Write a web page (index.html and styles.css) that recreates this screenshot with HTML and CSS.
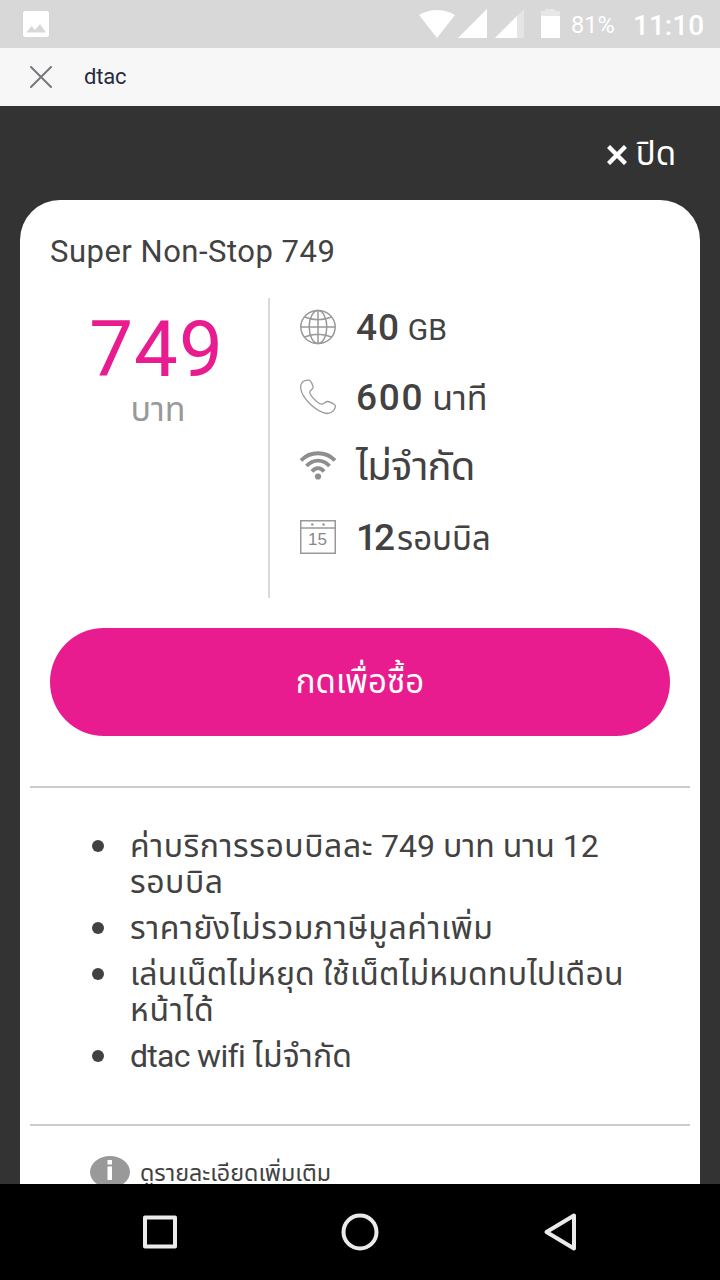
FILE: index.html
```html
<!DOCTYPE html>
<html lang="th">
<head>
<meta charset="utf-8">
<title>dtac</title>
<link rel="stylesheet" href="styles.css">
</head>
<body>
<header class="status">
  <svg class="status-image" width="26" height="26" viewBox="0 0 26 26"><path fill="#fff" fill-rule="evenodd" d="M2 0H24Q26 0 26 2V24Q26 26 24 26H2Q0 26 0 24V2Q0 0 2 0ZM3.500 21.500H23L17 13L12 19L8.500 15Z"/></svg>
  <svg class="signals" width="142" height="30" viewBox="0 0 142 30" fill="#fff">
    <path d="M0 6Q18-4 36 6L18 29Z"/>
    <path d="M39 29L68 0V29Z"/>
    <path opacity=".35" d="M76 29L105 0V29Z"/>
    <path d="M76 29L98 7V29Z"/>
    <path opacity=".4" d="M122 2H126V0H136V2H141V8H122Z"/>
    <path d="M122 7H141V29H122Z"/>
  </svg>
  <span class="battery">81%</span>
  <span class="clock">11:10</span>
</header>
<nav class="toolbar">
  <svg width="22" height="22" viewBox="0 0 22 22" fill="none" stroke="#77777f" stroke-width="2" stroke-linecap="round"><path d="M1 1L21 21M21 1L1 21"/></svg>
  <span>dtac</span>
</nav>
<main class="page">
  <div class="close">
    <svg width="20" height="20" viewBox="0 0 20 20" stroke="#fff" stroke-width="4.400"><path d="M1.500 1.500L18.500 18.500M18.500 1.500L1.500 18.500"/></svg>
    <span>ปิด</span>
  </div>
  <article class="card">
    <h1 class="title">Super Non-Stop 749</h1>
    <section class="plan">
      <div class="price">
        <div class="amount">749</div>
        <div class="baht">บาท</div>
      </div>
      <ul class="features">
        <li>
          <svg class="icon" viewBox="0 0 36 36" fill="none" stroke="#999" stroke-width="1.500"><ellipse cx="18" cy="18" rx="17.200" ry="16.500"/><ellipse cx="18" cy="18" rx="8.800" ry="16.500"/><path d="M18 1V35M1 18H35M4.500 8Q18 13.500 31.500 8M4.500 28Q18 22.500 31.500 28"/></svg>
          <span class="feature"><b class="n40">40</b><span class="gb">GB</span></span>
        </li>
        <li>
          <svg class="icon" viewBox="0 0 36 36" fill="none" stroke="#999" stroke-width="1.300" stroke-linejoin="round"><path d="M1.500 4.500C3 1.800 6 1 9.500 1.200C11 2 13 6.500 13.200 8.500C13 10 9.700 11.200 9.700 13.300C10.500 17 17.500 24.500 21.500 25.200C24 25.300 25.500 22.300 27.500 22.500C30 22.700 34 24.500 35.300 26.500C35.700 29.500 32.500 34.500 27.500 34.500C16 33.500 1.500 18.500 .7 9C.6 7.300 .8 5.800 1.500 4.500Z"/></svg>
          <span class="feature"><b class="n600">600</b><span class="minutes">นาที</span></span>
        </li>
        <li>
          <svg class="icon" viewBox="0 0 36 36" fill="none" stroke="#8e8e8e" stroke-width="3.900"><path d="M1 11.500C10 1.800 26 1.800 35 11.500M6.500 17C13 9.800 23 9.800 29.500 17M12 22.500C15.500 18 20.500 18 24 22.500"/><circle cx="18" cy="27.500" r="3.100" fill="#8e8e8e" stroke="none"/></svg>
          <span class="feature unlimited">ไม่จำกัด</span>
        </li>
        <li>
          <svg class="icon" viewBox="0 0 36 36"><path fill="none" stroke="#999" stroke-width="1.500" d="M.75 1.750H35.250V34.250H.75ZM1 9H35"/><circle cx="12.300" cy="5.500" r="1.300" fill="#999"/><circle cx="23.500" cy="5.500" r="1.300" fill="#999"/><text class="day" x="17.500" y="26">15</text></svg>
          <span class="feature"><b class="n12">12</b><span class="cycles">รอบบิล</span></span>
        </li>
      </ul>
    </section>
    <button class="buy">กดเพื่อซื้อ</button>
    <ul class="details">
      <li><span class="loose">ค่าบริการรอบบิลละ</span> 749 บาท นาน 12<br><span class="loose">รอบบิล</span></li>
      <li><span class="loose">ราคายังไม่รวมภาษีมูลค่าเพิ่ม</span></li>
      <li><span class="snug">เล่นเน็ตไม่หยุด ใช้เน็ตไม่หมดทบไปเดือน</span><br><span class="wide">หน้าได้</span></li>
      <li><span class="tight">dtac wifi</span> <span class="snug">ไม่จำกัด</span></li>
    </ul>
    <div class="more">
      <svg width="40" height="32" viewBox="0 0 40 32"><ellipse cx="20" cy="16" rx="20" ry="16" fill="#999"/><path fill="#fff" d="M17.500 4H22V8.500H17.500ZM17.500 10.500H22V24H17.500Z"/></svg>
      <span>ดูรายละเอียดเพิ่มเติม</span>
    </div>
  </article>
</main>
<footer class="android-nav">
  <svg width="720" height="96" viewBox="0 0 720 96" fill="none" stroke="#ebebeb" stroke-width="4" stroke-linejoin="round"><path d="M145 33.500H175V62.500H145Z"/><circle cx="360" cy="48" r="16.500"/><path d="M546.500 48L574 31.500V64.500Z"/></svg>
</footer>
</body>
</html>
```
FILE: styles.css
```css
* { box-sizing: border-box; }
body { margin: 0; width: 720px; height: 1280px; display: flex; flex-direction: column; overflow: hidden; background: #333; color: #424242; font-family: Roboto, "Noto Sans Thai", "Noto Sans", sans-serif; white-space: nowrap; }
svg { display: block; flex: none; }
.status { height: 48px; flex: none; display: flex; align-items: center; background: #d8d8d8; color: #fff; padding: 0 16px 0 23px; }
.signals { margin: 0 10px 0 auto; }
.battery { font-size: 23.5px; width: 62px; margin-top: 2px; }
.clock { font-size: 28px; font-weight: 500; width: 71px; margin-top: 2px; }
.toolbar { height: 58px; flex: none; display: flex; align-items: center; gap: 32px; padding-left: 30px; background: #f7f7f7; color: #272b40; font-size: 22px; }
.toolbar span { margin-top: -1px; letter-spacing: -.2px; }
.page { height: 1078px; flex: none; padding: 0 20px; overflow: hidden; }
.close { height: 94px; display: flex; align-items: center; justify-content: flex-end; gap: 9px; padding: 4px 24px 0 0; color: #fff; font-size: 33px; }
.card { height: 1100px; background: #fff; border-radius: 40px 40px 0 0; padding-top: 31px; }
.title { height: 42px; margin: 0 30px; font-size: 31px; line-height: 42px; font-weight: 400; letter-spacing: .5px; }
.plan { display: flex; height: 300px; margin-top: 25px; }
.price { width: 250px; border-right: 2px solid #dadada; text-align: center; padding-left: 25px; }
.amount { font-size: 78px; line-height: 78px; height: 78px; margin-top: 13px; color: #e81c8e; letter-spacing: 1px; }
.baht { color: #999; font-size: 34px; line-height: 40px; padding-left: 3px; }
.features { list-style: none; margin: 0; padding: 0 0 0 30px; }
.features li { display: flex; height: 70px; gap: 20px; }
.icon { width: 36px; height: 36px; margin-top: 11px; }
.feature { display: flex; align-items: baseline; height: 60px; line-height: 60px; gap: 8px; }
.feature b { font-size: 37px; font-weight: 500; }
.n40 { letter-spacing: .9px; }
.n600 { letter-spacing: 1.7px; }
.feature .n12 { letter-spacing: -3px; margin-right: -3px; }
.gb { font-size: 30px; }
.minutes { font-size: 34px; }
.cycles { font-size: 33px; }
.unlimited { font-size: 40px; letter-spacing: -.9px; margin-top: -1px; }
.day { font: 17px "Liberation Sans", sans-serif; fill: #888; text-anchor: middle; }
.buy { display: block; width: 620px; height: 108px; margin: 30px 30px 50px; padding: 2px 0 0; border: 0; border-radius: 54px; background: #e81c8e; color: #fff; font: inherit; font-size: 33px; }
.details { height: 340px; margin: 0 10px; padding: 40px 0 0 100px; border: solid #ccc; border-width: 2px 0; font-size: 32px; line-height: 36px; list-style: none; }
.details li { position: relative; margin-bottom: 10px; }
.details li::before { content: ""; position: absolute; left: -38px; top: 12px; width: 12px; height: 12px; border-radius: 50%; background: #424242; }
.loose { letter-spacing: .55px; }
.snug { letter-spacing: .17px; }
.wide { letter-spacing: .8px; }
.tight { letter-spacing: -.7px; }
.more { display: flex; gap: 10px; padding: 30px 0 0 70px; font-size: 23.3px; line-height: 34px; }
.android-nav { height: 96px; flex: none; background: #000; }
```
